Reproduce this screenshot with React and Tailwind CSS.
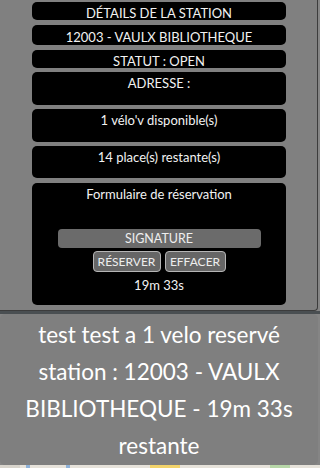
import React from 'react'

const Box = ({ h, mt, children }) => (
  <div
    className="w-[254px] bg-black rounded-[5px] text-center text-[13px] leading-[16px] text-[#f2f2f2] pt-[3px]"
    style={{ height: h, marginTop: mt }}
  >
    {children}
  </div>
)

export default function App() {
  return (
    <div
      className="w-[320px] h-[468px] overflow-hidden bg-[#858585] flex flex-col"
      style={{ fontFamily: 'Lato, "Open Sans", sans-serif' }}
    >
      {/* station details panel */}
      <div className="w-[318px] h-[311px] shrink-0 bg-[#808080] border-r border-b border-[#3c3c3c] rounded-br-[4px] flex flex-col items-start pl-[32px]">
        <Box h={18} mt={2}>DÉTAILS DE LA STATION</Box>
        <Box h={20} mt={5}>
          <div className="pt-[1px]">12003 - VAULX BIBLIOTHEQUE</div>
        </Box>
        <Box h={18} mt={5}>STATUT : OPEN</Box>
        <Box h={33} mt={4}>ADRESSE :</Box>
        <Box h={33} mt={4}>1 vélo'v disponible(s)</Box>
        <Box h={32} mt={4}>14 place(s) restante(s)</Box>
        <Box h={122} mt={5}>
          <div>Formulaire de réservation</div>
          <div className="flex flex-col items-center mt-[27px]">
            <div className="w-[203px] h-[19px] bg-[#6b6b6b] rounded-[4px] text-[12.5px] leading-[19px] text-[#eeeeee]">
              SIGNATURE
            </div>
            <div className="flex gap-[4px] mt-[3px]">
              <button className="w-[68px] h-[21px] bg-[#666666] border border-[#b5b5b5] rounded-[4px] text-[12px] leading-[19px] text-[#eeeeee]">
                RÉSERVER
              </button>
              <button className="w-[61px] h-[21px] bg-[#666666] border border-[#b5b5b5] rounded-[4px] text-[12px] leading-[19px] text-[#eeeeee]">
                EFFACER
              </button>
            </div>
            <div className="mt-[5px] text-[13px] leading-[16px]">19m 33s</div>
          </div>
        </Box>
      </div>

      {/* map edge */}
      <div className="h-[3px] shrink-0 bg-[#4a4f52]" />

      {/* reservation message */}
      <div className="w-[318px] h-[151px] shrink-0 bg-[#7f7f7f] rounded-[5px] flex flex-col items-center justify-center text-center text-white text-[22.5px] leading-[37px] px-[6px]">
        test test a 1 velo reservé station : 12003 - VAULX BIBLIOTHEQUE - 19m 33s restante
      </div>

      {/* map bottom */}
      <div className="flex-1 bg-[#e6e2da] flex items-start">
        <div className="w-[20px] h-full bg-[#d8d4cc]" />
        <div className="w-[4px] h-full bg-[#8fb2d8] ml-[6px]" />
        <div className="w-[4px] h-full bg-[#8fb2d8] ml-[36px]" />
        <div className="w-[30px] h-full bg-[#f2d36b] ml-[80px]" />
        <div className="w-[20px] h-full bg-[#b7d7a8] ml-[90px]" />
      </div>
    </div>
  )
}
